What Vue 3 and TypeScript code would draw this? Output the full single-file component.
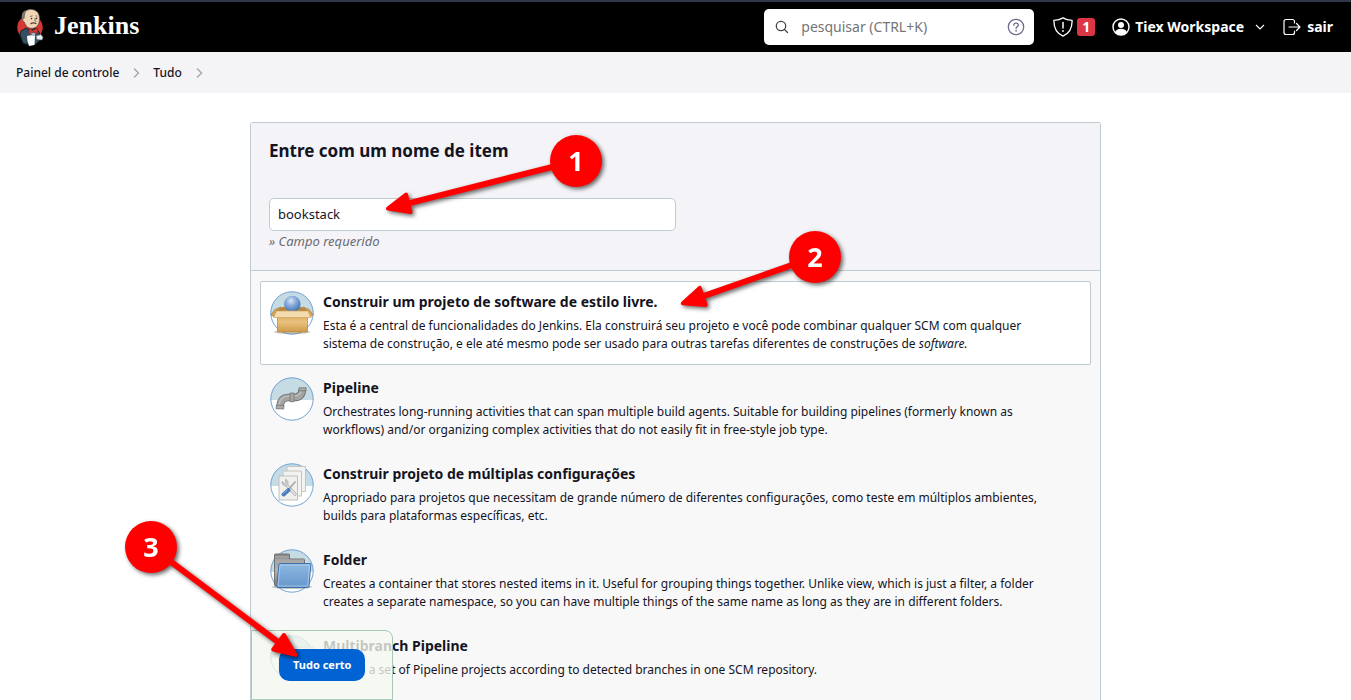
<script setup lang="ts">
import { ref } from 'vue'

type IconName = 'box' | 'pipe' | 'matrix' | 'folder' | 'branch'

interface ItemType {
  id: string
  icon: IconName
  title: string
  text: string
  emphasis?: string
}

interface Marker {
  label: string
  x: number
  y: number
  tipX: number
  tipY: number
}

const itemTypes: ItemType[] = [
  {
    id: 'freestyle',
    icon: 'box',
    title: 'Construir um projeto de software de estilo livre.',
    text: 'Esta é a central de funcionalidades do Jenkins. Ela construirá seu projeto e você pode combinar qualquer SCM com qualquer sistema de construção, e ele até mesmo pode ser usado para outras tarefas diferentes de construções de ',
    emphasis: 'software.',
  },
  {
    id: 'pipeline',
    icon: 'pipe',
    title: 'Pipeline',
    text: 'Orchestrates long-running activities that can span multiple build agents. Suitable for building pipelines (formerly known as workflows) and/or organizing complex activities that do not easily fit in free-style job type.',
  },
  {
    id: 'matrix',
    icon: 'matrix',
    title: 'Construir projeto de múltiplas configurações',
    text: 'Apropriado para projetos que necessitam de grande número de diferentes configurações, como teste em múltiplos ambientes, builds para plataformas específicas, etc.',
  },
  {
    id: 'folder',
    icon: 'folder',
    title: 'Folder',
    text: 'Creates a container that stores nested items in it. Useful for grouping things together. Unlike view, which is just a filter, a folder creates a separate namespace, so you can have multiple things of the same name as long as they are in different folders.',
  },
  {
    id: 'multibranch',
    icon: 'branch',
    title: 'Multibranch Pipeline',
    text: 'Creates a set of Pipeline projects according to detected branches in one SCM repository.',
  },
]

const markers: Marker[] = [
  { label: '1', x: 325, y: 38, tipX: 135, tipY: 86 },
  { label: '2', x: 564, y: 134, tipX: 430, tipY: 181 },
  { label: '3', x: -100, y: 424, tipX: 46, tipY: 533 },
]

const angle = (m: Marker): number => (Math.atan2(m.tipY - m.y, m.tipX - m.x) * 180) / Math.PI
const reach = (m: Marker): number => Math.hypot(m.tipX - m.x, m.tipY - m.y)

const itemName = ref('bookstack')
const search = ref('')
const selected = ref('freestyle')
</script>

<template>
  <div class="page">
    <header class="topbar">
      <a class="brand" href="#">
        <svg class="butler" viewBox="0 0 28 38" aria-hidden="true">
          <ellipse cx="14" cy="19.500" rx="12.700" ry="12.500" fill="#d33833" />
          <path d="M7 35 4 27l1-4 5-3 4 3 5-3 4 4 2 7-5 5H9z" fill="#335061" stroke="#14222c" stroke-width="1" />
          <path d="M7 9C8 3 12 .8 16 1.500c5 .6 7.500 4 7.500 9 0 4.500-1.500 9-6.500 9.800-4.500.5-7.500-2-8.500-6C6.500 13.500 6 11 7 9z" fill="#f0d6b7" stroke="#54433a" stroke-width=".7" />
          <path d="M6.500 12C4.500 7 6.500 3 10.500 2 8.800 5 9.200 8 8.500 10.500z" fill="#82776d" />
          <path d="M14 8.500l2.500-.7M19.500 7.800l2 .5M19 10v3l1.300.6" fill="none" stroke="#6b5346" stroke-width=".8" />
          <path d="M14.500 16c1.500-1.200 4-1.200 6-.3" fill="none" stroke="#54433a" stroke-width="1.200" />
          <circle cx="15.500" cy="10.600" r=".8" fill="#333" />
          <circle cx="20.500" cy="10.400" r=".8" fill="#333" />
          <path d="M13 20.500l4 2.200 4.500-2.700v6l-4-2-4.500 2.500z" fill="#d33833" stroke="#8c1f1c" stroke-width=".6" />
          <path d="M14.500 25.500l3-1 2 1-1 3.500z" fill="#a5b5bf" />
          <path d="M11 28c3-1 5.500-1 8 0l-.5 9-5.500 1-1.500-5z" fill="#fff" />
          <path d="M20 28l5-1.500 2 3-1 2.500-5-.5z" fill="#e9eef1" stroke="#6b7780" stroke-width=".6" />
        </svg>
        <span>Jenkins</span>
      </a>

      <label class="search">
        <svg class="search-icon" viewBox="0 0 16 16" aria-hidden="true">
          <circle cx="7" cy="7" r="4.700" fill="none" stroke="#44444c" stroke-width="1.300" />
          <path d="M10.500 10.500 13.500 13.500" stroke="#44444c" stroke-width="1.300" stroke-linecap="round" />
        </svg>
        <input v-model="search" type="search" placeholder="pesquisar (CTRL+K)" aria-label="pesquisar" />
        <a class="help" href="#" aria-label="Ajuda">
          <svg viewBox="0 0 18 18" aria-hidden="true">
            <circle cx="9" cy="9" r="7.700" fill="none" stroke="#6f6c92" stroke-width="1.300" />
            <path d="M6.800 7.200C6.900 4.400 11.300 4.500 11.300 7c0 1.700-2.200 1.800-2.200 3.500" fill="none" stroke="#6f6c92" stroke-width="1.300" stroke-linecap="round" />
            <circle cx="9.100" cy="12.800" r=".9" fill="#6f6c92" />
          </svg>
        </a>
      </label>

      <nav class="account">
        <a class="security" href="#" aria-label="Alertas de segurança">
          <svg class="shield" viewBox="0 0 20 20" aria-hidden="true">
            <path d="M10 .9C7.500 2.500 4.500 3.200 .9 3.300c-.2 8 2.600 13 9.100 15.800 6.500-2.800 9.300-7.800 9.100-15.800C15.500 3.200 12.500 2.500 10 .9z" fill="none" stroke="#fff" stroke-width="1.300" stroke-linejoin="round" />
            <path d="M10 5.500v5.500" stroke="#fff" stroke-width="1.500" stroke-linecap="round" />
            <circle cx="10" cy="14" r=".9" fill="#fff" />
          </svg>
          <span class="count">1</span>
        </a>
        <a class="user" href="#">
          <svg class="icon" viewBox="0 0 18 18" aria-hidden="true">
            <circle cx="9" cy="9" r="8" fill="none" stroke="#fff" stroke-width="1.400" />
            <circle cx="9" cy="6.900" r="3" fill="#fff" />
            <path d="M3 14.200c1.200-2.500 3.400-3.400 6-3.400s4.800.9 6 3.400C12 18 6 18 3 14.200z" fill="#fff" />
          </svg>
          <span>Tiex Workspace</span>
          <svg class="chevron-down" viewBox="0 0 10 10" aria-hidden="true">
            <path d="M1 3l4 4 4-4" fill="none" stroke="#fff" stroke-width="1.100" />
          </svg>
        </a>
        <a class="logout" href="#">
          <svg class="icon" viewBox="0 0 18 18" aria-hidden="true">
            <path d="M11.500 5V3.500a2 2 0 0 0-2-2H3a2 2 0 0 0-2 2v11a2 2 0 0 0 2 2h6.500a2 2 0 0 0 2-2V13M6 9h11M13.500 5.500 17 9l-3.500 3.500" fill="none" stroke="#fff" stroke-width="1.200" stroke-linecap="round" stroke-linejoin="round" />
          </svg>
          <span>sair</span>
        </a>
      </nav>
    </header>

    <nav class="breadcrumbs" aria-label="Trilha">
      <template v-for="crumb in ['Painel de controle', 'Tudo']" :key="crumb">
        <a href="#">{{ crumb }}</a>
        <svg viewBox="0 0 8 12" aria-hidden="true">
          <path d="M2 1.500 6.500 6 2 10.500" fill="none" stroke="#a9a8b8" stroke-width="1.500" />
        </svg>
      </template>
    </nav>

    <main class="content">
      <form class="panel" @submit.prevent>
        <section class="name-section">
          <label for="item-name">Entre com um nome de item</label>
          <input id="item-name" v-model="itemName" type="text" />
          <p>» Campo requerido</p>
        </section>

        <ul class="types">
          <li v-for="item in itemTypes" :key="item.id">
            <label class="type" :class="{ active: selected === item.id }">
              <input v-model="selected" class="hidden-radio" type="radio" name="mode" :value="item.id" />
              <svg class="type-icon" viewBox="0 0 44 44" aria-hidden="true">
                <defs>
                  <linearGradient :id="item.id + '-blue'" x1="0" y1="0" x2="0" y2="1">
                    <stop offset="0" stop-color="#8fb8e2" />
                    <stop offset="1" stop-color="#6596cc" />
                  </linearGradient>
                  <linearGradient :id="item.id + '-tan'" x1="0" y1="0" x2="0" y2="1">
                    <stop offset="0" stop-color="#d9a95c" />
                    <stop offset=".4" stop-color="#e9c27f" />
                    <stop offset="1" stop-color="#cf9a48" />
                  </linearGradient>
                  <radialGradient :id="item.id + '-ball'" cx=".42" cy=".3" r=".7">
                    <stop offset="0" stop-color="#dce7f5" />
                    <stop offset=".4" stop-color="#8fb0dc" />
                    <stop offset="1" stop-color="#3f6fb4" />
                  </radialGradient>
                  <linearGradient :id="item.id + '-gray'" x1="0" y1="0" x2="0" y2="1">
                    <stop offset="0" stop-color="#8a8a8a" />
                    <stop offset=".5" stop-color="#b4b4b2" />
                    <stop offset="1" stop-color="#7d7d7d" />
                  </linearGradient>
                </defs>
                <circle cx="22" cy="22" r="21.500" fill="#fff" />
                <path d="M.5 22a21.500 21.500 0 0 1 43 0v1H.5z" fill="#c5dce5" />
                <circle cx="22" cy="22" r="21.200" fill="none" stroke="#74a3d6" stroke-width="1" />

                <g v-if="item.icon === 'box'">
                  <ellipse cx="22" cy="41" rx="18" ry="2.200" fill="#777" opacity=".4" />
                  <path d="M6 20 12 16h20l6 4v3H6z" fill="#b98640" />
                  <circle cx="22.300" cy="13" r="8.300" :fill="`url(#${item.id}-ball)`" />
                  <path d="M6 20.500 11 16 5 18.500.8 24l3 1.500zM38 20.500 33 16l6 2.500 4.200 5.500-3 1.500z" fill="#d9a75c" stroke="#a87531" stroke-width=".7" />
                  <path d="M7.500 24h30v16q0 1-1 1h-28q-1 0-1-1z" :fill="`url(#${item.id}-tan)`" stroke="#b9833a" stroke-width=".7" />
                  <path d="M6.500 20h31.500l3.200 6.500H3.500z" fill="#f5dcb0" stroke="#cda05c" stroke-width=".7" />
                </g>

                <g v-else-if="item.icon === 'pipe'">
                  <path d="M10 29.500c.5-6 3-9 9-9h5c5.500 0 8-3 8.500-8" fill="none" stroke="#707070" stroke-width="7.600" />
                  <path d="M10 29.500c.5-6 3-9 9-9h5c5.500 0 8-3 8.500-8" fill="none" stroke="#a4a4a3" stroke-width="6.200" />
                  <path d="M9 28.500c.5-6 4-9.500 10-9.500h5c4.500 0 7-2 7.500-6" fill="none" stroke="#bebebd" stroke-width="1.500" />
                  <path d="M6.500 28l7.500.5-.3 3.500-7.700-.3zM29 10.800h7.200l-.3 3H28.800zM20 16h4v8.700h-4z" fill="#a9a9a8" stroke="#6a6a6a" stroke-width=".7" />
                </g>

                <g v-else-if="item.icon === 'matrix'">
                  <path d="M17 3.500h18.500v25H17z" fill="#f3f3f1" stroke="#c3c4c2" />
                  <path d="M13 8h18.500v25H13z" fill="#f3f3f1" stroke="#c3c4c2" />
                  <path d="M9 13h18.500v24H9z" fill="#f0f0ee" stroke="#bfc0be" />
                  <path d="M16 21.500 25 31" stroke="#9da19f" stroke-width="3.200" stroke-linecap="round" />
                  <path d="M16 21.500 25 31" stroke="#e0e2e0" stroke-width="1.900" stroke-linecap="round" />
                  <path d="M12 18.500c0 4 3 5 5 3.500s1-5-1.500-5.500l.5 3-1.500 1z" fill="#d5d8d6" stroke="#9da19f" stroke-width=".8" />
                  <path d="M25.500 18.500l-7 8" stroke="#a4a8a6" stroke-width="1.600" />
                  <path d="M18.500 27 13.500 31.500" stroke="#4a7aba" stroke-width="4" stroke-linecap="round" />
                  <path d="M17 27 13 30.500" stroke="#8bb1df" stroke-width="1" stroke-linecap="round" />
                </g>

                <g v-else-if="item.icon === 'folder'">
                  <ellipse cx="22" cy="38" rx="20" ry="2" fill="#555" opacity=".35" />
                  <path d="M4.500 6q0-1 1-1h13q1 0 1 1v4h14q1 0 1 1v26H6q-1.500 0-1.500-2z" :fill="`url(#${item.id}-gray)`" stroke="#666" stroke-width=".9" />
                  <path d="M5 8h14M5 11h29M5 13h29" stroke="#c5c5c2" stroke-width=".6" />
                  <path d="M9 15.500q.1-1 1-1h30q1 0 .8 1L39 37q-.2 1.500-1.500 1.500H8q-1.300 0-1.200-1.300z" :fill="`url(#${item.id}-blue)`" stroke="#3e70aa" stroke-width="1" />
                  <path d="M10 16h29.500l-1.700 21H8z" fill="none" stroke="#b4d0ee" stroke-width=".8" />
                </g>

                <g v-else>
                  <path d="M9 9h13v3h21v7l-2 19H9z" fill="#d5dadc" stroke="#a9b2b6" />
                  <path d="M12 16h32l-3 22H10z" fill="#e8eef1" stroke="#a9b7be" />
                </g>
              </svg>
              <span class="type-body">
                <span class="type-title">{{ item.title }}</span>
                <span class="type-text">{{ item.text }}<em v-if="item.emphasis">{{ item.emphasis }}</em></span>
              </span>
            </label>
          </li>
        </ul>

        <div class="submit-bar">
          <button type="submit">Tudo certo</button>
        </div>

        <svg class="markers" aria-hidden="true">
          <g v-for="m in markers" :key="m.label" class="marker">
            <g :transform="`translate(${m.x} ${m.y}) rotate(${angle(m)})`">
              <path :d="`M20 0H${reach(m) - 20}`" stroke="#f00" stroke-width="6" />
              <path :d="`M${reach(m) - 2} 0 L${reach(m) - 23} -9 V9 Z`" fill="#f00" stroke="#f00" stroke-width="4" stroke-linejoin="round" />
            </g>
            <circle :cx="m.x" :cy="m.y" r="26" fill="#f00" />
            <text :x="m.x" :y="m.y + 10" text-anchor="middle">{{ m.label }}</text>
          </g>
        </svg>
      </form>
    </main>
  </div>
</template>

<style>
body {
  margin: 0;
}
</style>

<style scoped>
.page {
  display: flex;
  flex-direction: column;
  height: 100vh;
  overflow: hidden;
  background: #fff;
  color: #14141f;
  font-family: "Noto Sans", sans-serif;
  font-size: 13px;
}

.page *,
.page {
  box-sizing: border-box;
}

a {
  color: inherit;
  text-decoration: none;
}

.topbar {
  display: flex;
  flex: none;
  align-items: center;
  height: 52px;
  padding: 0 18px 0 16px;
  border-top: 2px solid #32364a;
  background: #000;
  color: #fff;
}

.brand {
  display: flex;
  align-items: center;
  gap: 10px;
  margin-right: auto;
  font: bold 26px/32px "Liberation Serif", serif;
}

.brand span {
  padding-bottom: 2px;
}

.butler {
  width: 28px;
  height: 38px;
}

.search {
  display: flex;
  align-items: center;
  width: 270px;
  height: 36px;
  padding: 0 9px 0 10px;
  border-radius: 5px;
  background: #fff;
}

.search-icon {
  width: 16px;
  height: 16px;
}

.search input {
  flex: 1;
  min-width: 0;
  margin-left: 11px;
  padding: 0;
  border: 0;
  outline: 0;
  background: transparent;
  font: 14px/20px "Noto Sans", sans-serif;
}

.search input::placeholder {
  color: #757575;
}

.help,
.help svg {
  display: block;
  width: 18px;
  height: 18px;
}

.account {
  display: flex;
  align-items: center;
  font-size: 14px;
  font-weight: 700;
  line-height: 18px;
}

.account a {
  display: flex;
  align-items: center;
}

.security {
  gap: 4px;
  margin-left: 19px;
}

.shield {
  width: 20px;
  height: 20px;
}

.count {
  width: 18px;
  border-radius: 3px;
  background: #dc3545;
  text-align: center;
}

.user {
  gap: 5px;
  margin-left: 17px;
}

.icon {
  width: 18px;
  height: 18px;
}

.chevron-down {
  width: 10px;
  height: 10px;
  margin-left: 6px;
}

.logout {
  gap: 6px;
  margin-left: 18px;
}

.breadcrumbs {
  display: flex;
  flex: none;
  align-items: center;
  gap: 13px;
  height: 41px;
  padding: 0 16px;
  background: #f4f4f7;
  font-size: 12px;
  font-weight: 500;
}

.breadcrumbs svg {
  width: 8px;
  height: 12px;
}

.content {
  flex: 1;
  min-height: 0;
  padding: 29px 24px 0;
}

.panel {
  position: relative;
  display: flex;
  flex-direction: column;
  max-width: 851px;
  height: 100%;
  margin: 0 auto;
  border: 1px solid #bfcbd0;
  border-bottom: 0;
  border-radius: 3px 3px 0 0;
  background: #f8f8f8;
}

.name-section {
  flex: none;
  padding: 16px 18px 18px;
  border-bottom: 1px solid #bfcbd0;
  background: #f3f3f8;
}

.name-section label {
  display: block;
  margin-bottom: 35px;
  font-size: 17px;
  font-weight: 700;
  line-height: 24px;
}

.name-section input {
  display: block;
  width: 50%;
  height: 33px;
  padding: 0 8px 2px;
  border: 1px solid #bfcbd0;
  border-radius: 5px;
  background: #fff;
  color: inherit;
  font: 13px/20px "Noto Sans", sans-serif;
}

.name-section p {
  margin: 0;
  color: #6c6c70;
  font-size: 13px;
  font-style: italic;
  line-height: 21px;
}

.types {
  display: flex;
  flex: 1;
  flex-direction: column;
  gap: 2px;
  min-height: 0;
  margin: 0;
  padding: 10px 9px 0;
  overflow: hidden;
  list-style: none;
}

.type {
  position: relative;
  display: flex;
  gap: 9px;
  min-height: 84px;
  padding: 9px 32px 9px 9px;
  border: 1px solid transparent;
  border-radius: 2px;
  cursor: pointer;
}

.type.active {
  border-color: #bfcbd0;
  background: #fff;
}

.hidden-radio {
  position: absolute;
  opacity: 0;
}

.type-icon {
  flex: none;
  width: 44px;
  height: 44px;
}

.type-title,
.type-text {
  display: block;
}

.type-title {
  margin-bottom: 4px;
  font-size: 14px;
  font-weight: 700;
  line-height: 22px;
}

.type-text {
  font-size: 12px;
  line-height: 18px;
}

.submit-bar {
  position: absolute;
  bottom: 0;
  left: 0;
  padding: 18px 27px;
  border: 1px solid #a8c9b8;
  border-radius: 0 8px 0 0;
  background: rgba(245, 249, 240, 0.78);
}

.submit-bar button {
  display: block;
  height: 32px;
  padding: 0 14px;
  border: 0;
  border-radius: 10px;
  background: #0062d3;
  color: #fff;
  font: 700 11px/20px "Noto Sans", sans-serif;
}

.markers {
  position: absolute;
  top: 0;
  left: 0;
  width: 100%;
  height: 100%;
  overflow: visible;
  pointer-events: none;
}

.marker {
  filter: drop-shadow(2px 2px 2px rgba(0, 0, 0, 0.6));
}

.marker text {
  fill: #fff;
  font: bold 27px "Noto Sans", sans-serif;
}
</style>
